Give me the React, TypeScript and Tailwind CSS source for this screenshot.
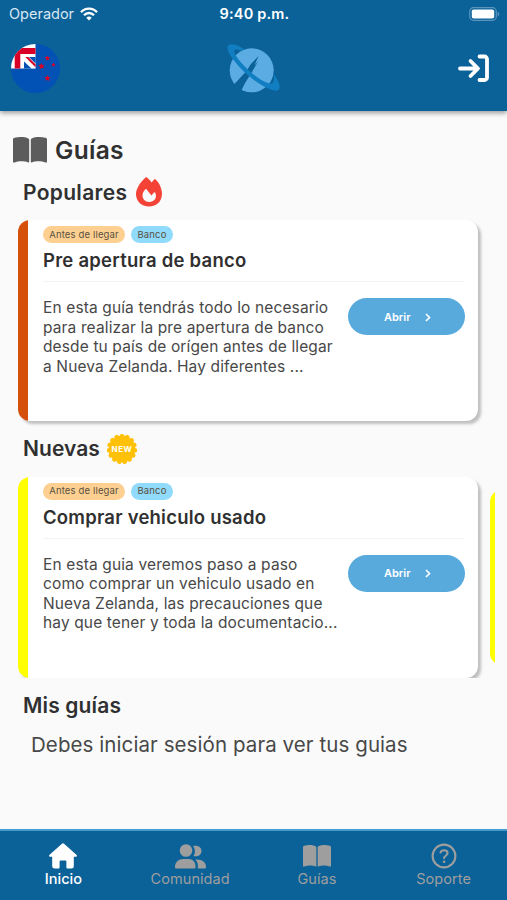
import { type FC, type ReactNode } from "react";

type Guide = {
  id: number;
  title: string;
  titleClass: string;
  tags: { label: string; className: string }[];
  lines: string[];
  barColor: string;
};

const tags = [
  { label: "Antes de llegar", className: "bg-[#fdd092] w-[82px]" },
  { label: "Banco", className: "bg-[#90dafb] w-[42px]" },
];

const popularGuide: Guide = {
  id: 1,
  title: "Pre apertura de banco",
  titleClass: "tracking-[0.240px]",
  tags,
  lines: [
    "En esta guía tendrás todo lo necesario",
    "para realizar la pre apertura de banco",
    "desde tu país de orígen antes de llegar",
    "a Nueva Zelanda. Hay diferentes ...",
  ],
  barColor: "bg-[#d5500a]",
};

const newGuide: Guide = {
  id: 2,
  title: "Comprar vehiculo usado",
  titleClass: "tracking-[0.220px]",
  tags,
  lines: [
    "En esta guia veremos paso a paso",
    "como comprar un vehiculo usado en",
    "Nueva Zelanda, las precauciones que",
    "hay que tener y toda la documentacio...",
  ],
  barColor: "bg-[#ffff00]",
};

const BookIcon: FC<{ className?: string }> = ({ className }) => (
  <svg viewBox="0 0 34 26" preserveAspectRatio="none" className={className} fill="currentColor">
    <path d="M0 2.600C0 1.600.600 1 1.500.800 6-.400 12-.200 15.300 1.500c.600.300.900.700.900 1.400v21.800c0 .700-.500 1-1.100.700C11.500 24 5.500 23.900 1.500 25.500.700 25.900 0 25.500 0 24.600Z" />
    <path d="M34 2.600C34 1.600 33.400 1 32.500.800 28-.400 22-.200 18.700 1.500c-.600.300-.900.700-.900 1.400v21.800c0 .700.500 1 1.100.700C22.500 24 28.500 23.900 32.500 25.500 33.300 25.900 34 25.500 34 24.600Z" />
  </svg>
);

const WifiIcon: FC = () => (
  <svg viewBox="0 0 18 14" className="h-[14px] w-[18px]" fill="none" stroke="white" strokeWidth="2.300">
    <path d="M1 5.200C5.300.4 12.700.4 17 5.200" />
    <path d="M4 8.300C6.800 5.200 11.200 5.200 14 8.300" />
    <path d="M9 13.500 6.300 10.700C7.800 9.200 10.200 9.200 11.700 10.700Z" fill="white" stroke="none" />
  </svg>
);

const BatteryIcon: FC = () => (
  <svg viewBox="0 0 31 14" className="h-[14px] w-[31px]">
    <rect x="0.700" y="0.700" width="26.600" height="12.600" rx="3.800" fill="none" stroke="#5b95bb" strokeWidth="1.200" />
    <rect x="2.800" y="2.500" width="22.400" height="9" rx="1.800" fill="white" />
    <path d="M28.700 4.700c2 .8 2 3.800 0 4.600Z" fill="#5b95bb" />
  </svg>
);

const FlagIcon: FC = () => (
  <svg viewBox="0 0 49 49" className="size-[49px]">
    <clipPath id="flag">
      <circle cx="24.500" cy="24.500" r="24.500" />
    </clipPath>
    <g clipPath="url(#flag)">
      <path d="M0 0h49v49H0Z" fill="#0251b5" />
      <path d="M0 0h24.500v24.500H0Z" fill="white" />
      <path d="M0 4h24.500v6H9.300v14.500H3.700V10H0Z" fill="#d80027" />
      <path d="M13 13h11.500v11.500H13Z" fill="#0251b5" />
      <path d="M12.500 12.500H17.500L24.500 19.500v5H20.500L12.500 17Z" fill="white" />
      <path d="M14.300 13h2.900l7.300 7.300v2.900Z" fill="#d80027" />
    </g>
    <g fill="#d80027">
      <path d="m36.500 11.500.7 1.700 2-.1-1.400 1.500.7 1.900-2-.9-1.700 1 .3-2-1.500-1.300 2-.2Z" />
      <path d="m30.500 19 .9 1.900 2.100-.1-1.300 1.700.7 2-2.100-.7-1.900 1.100.1-2.200-1.700-1.300 2.200-.6Z" />
      <path d="m42.500 18.600.6 1.300 1.400.1-1 1.100.2 1.400-1.300-.6-1.200.8.200-1.500-1.100-.9 1.400-.3Z" />
      <path d="m36.500 31 .9 1.900 2.200.2-1.600 1.500.4 2.300-1.900-1.100-2 1 .4-2.200-1.500-1.500 2.100-.2Z" />
    </g>
  </svg>
);

const LogoIcon: FC = () => (
  <svg viewBox="0 0 56 50" className="h-[50px] w-[56px]">
    <circle cx="25.700" cy="27.300" r="22" fill="#5aace2" />
    <path d="M32.500 13 24.500 21.500 20.500 28 7 42.500 14.500 50.500C16.500 44 20 38 24.500 31.500L32 18.500 28.500 22.500Z" fill="#0b6299" />
    <path
      d="M18 6C10 .500 1.500-.500 1.500 4.500 1.500 9 5 13.500 8 17.500 18 30.500 31.500 41 44 46.300 50.500 49 54.500 47.500 53.500 42.500 53 39.500 51 35.500 47.500 30.500 48.500 35 48.500 38.500 46 40.500 38.500 41.500 24 29.500 16 20.500 9.500 13 7 8.500 9 7 10.500 6 13.500 7 15 7.800Z"
      fill="#107ec1"
    />
  </svg>
);

const LoginIcon: FC = () => (
  <svg viewBox="0 0 32 28" className="h-[28px] w-[32px]" fill="none" stroke="white" strokeWidth="3.800" strokeLinecap="round" strokeLinejoin="round">
    <path d="M2 14.500h17M12.500 7 20 14.500l-7.500 7.500" />
    <path d="M21.500 2.500H26.500a2.500 2.500 0 0 1 2.500 2.500v18.500A2.500 2.500 0 0 1 26.500 26h-5" />
  </svg>
);

const FireIcon: FC = () => (
  <svg viewBox="0 0 26 30" className="h-[30px] w-[26px]">
    <path d="M9.500.5c.4-.4 1-.4 1.500 0 2 1.700 3.500 3.400 4.700 5 .9-1.300 1.700-2.300 2.500-3 .5-.4 1-.4 1.500 0C23.500 6 26 12 26 16.500 26 24.500 20.500 29.500 13 29.500S0 24.500 0 17C0 12 4 5.500 9.500.5Z" fill="#f44336" />
    <path d="M9.300 12.500c.5-.6 1-.5 1.400 0l4.700 5.900 2.600-2.900c.4-.5.9-.4 1.200.2C21.500 20.500 18.500 25 13.200 25 9 25 6.500 22 6.500 18.500c0-2.200 1.100-4.300 2.800-6Z" fill="#fafafa" />
  </svg>
);

// scalloped badge, one bump per 24 degrees
const NewBadge: FC = () => (
  <svg viewBox="0 0 32 32" className="size-[32px]">
    <g fill="#ffc107">
      <circle cx="16" cy="16" r="13.400" />
      {Array.from({ length: 15 }, (_, i) => (
        <rect key={i} x="13.900" y="0.900" width="4.200" height="5" rx="1.500" transform={`rotate(${i * 24} 16 16)`} />
      ))}
    </g>
    <text x="16" y="19.200" textAnchor="middle" fontFamily="Inter, sans-serif" fontSize="8" fontWeight="700" letterSpacing=".5" fill="white">
      NEW
    </text>
  </svg>
);

const HomeIcon: FC = () => (
  <svg viewBox="0 0 28 26" className="h-[26px] w-[28px]" fill="white">
    <path d="M12.700.9a2 2 0 0 1 2.600 0L27.400 11.700c1 .9.500 2.100-.8 2.100h-1.800V23a2.500 2.500 0 0 1-2.500 2.500h-3.600c-.8 0-1.300-.5-1.300-1.300v-5.500c0-.8-.5-1.300-1.300-1.300h-4.200c-.8 0-1.300.5-1.300 1.300v5.500c0 .8-.5 1.300-1.300 1.300H5.700A2.500 2.500 0 0 1 3.200 23v-9.200H1.400c-1.300 0-1.800-1.200-.8-2.100Z" />
  </svg>
);

const PeopleIcon: FC = () => (
  <svg viewBox="0 0 31 25" className="h-[25px] w-[31px]" fill="currentColor">
    <circle cx="11" cy="6.500" r="6.300" />
    <path d="M0 22.500C0 18 4 15 8 15h5.500c4.500 0 7 3.500 7 7.500v.8a1.300 1.300 0 0 1-1.300 1.300H1.300A1.300 1.300 0 0 1 0 23.300Z" />
    <path d="M18 2c5-1.200 8.500 1.300 8.500 5 0 4-4 6.200-8 5 2-2.900 2-7-.5-10Z" />
    <path d="M20.500 15.700c6-.7 10.500 2.500 10.500 7v.5a1.300 1.300 0 0 1-1.300 1.300h-7c.8-3.500-.2-6.800-2.200-8.800Z" />
  </svg>
);

const HelpIcon: FC = () => (
  <svg viewBox="0 0 26 26" className="size-[26px]" fill="none" stroke="currentColor" strokeWidth="2.100" strokeLinecap="round">
    <circle cx="13" cy="13" r="11.400" />
    <path d="M9.500 9.500c.5-1.800 1.800-2.300 3.500-2.300 2 0 3.600 1.100 3.600 2.900 0 2.600-3.500 2.700-3.500 5" />
    <circle cx="13.100" cy="18.700" r=".6" fill="currentColor" strokeWidth="1.400" />
  </svg>
);

const GuideCard: FC<{ guide: Guide }> = ({ guide }) => {
  return (
    <article className="flex h-[201px] w-[460px] shrink-0 overflow-hidden rounded-[12px] bg-white shadow-[3px_3px_3px_rgba(0,0,0,0.24)]">
      <div className={`w-[10px] shrink-0 ${guide.barColor}`} />
      <div className="flex flex-1 flex-col pl-[15px] pr-[13px]">
        <div className="mt-[6px] flex gap-[6px]">
          {guide.tags.map((tag) => (
            <span
              key={tag.label}
              className={`flex h-[17px] items-center justify-center whitespace-nowrap rounded-full pt-px text-[9.500px] tracking-[0.150px] text-[#58503f] ${tag.className}`}
            >
              {tag.label}
            </span>
          ))}
        </div>
        <h3 className={`mt-[5px] h-[24px] whitespace-nowrap text-[18.500px] font-semibold leading-[24px] ${guide.titleClass}`}>{guide.title}</h3>
        <div className="mt-[9px] h-px bg-[#f4f4f4]" />
        <div className="mt-[16px] flex items-start justify-between">
          <p className="whitespace-nowrap text-[15.500px] leading-[19.500px] tracking-[0.130px] text-[#484848]">
            {guide.lines.map((line) => (
              <span key={line} className="block">
                {line}
              </span>
            ))}
          </p>
          <button className="flex h-[37px] w-[117px] shrink-0 items-center rounded-full bg-[#58aadd] pl-[36px] pt-px text-[11px] font-semibold text-white">
            Abrir
            <svg viewBox="0 0 6 9" className="ml-[14px] h-[9px] w-[6px]" fill="none" stroke="white" strokeWidth="1.600">
              <path d="m1 1 3.500 3.500L1 8" />
            </svg>
          </button>
        </div>
      </div>
    </article>
  );
};

const TabItem: FC<{ label: string; active?: boolean; children: ReactNode }> = ({ label, active, children }) => (
  <a className={`flex flex-1 flex-col items-center ${active ? "text-white" : "text-[#9e9e9e]"}`}>
    <div className="mt-[11px] flex h-[28px] items-center justify-center">{children}</div>
    <span className={`text-[14.500px] leading-[18px] ${active ? "font-medium" : "tracking-[0.060px]"}`}>{label}</span>
  </a>
);

const App: FC = () => {
  return (
    <div className="flex h-[900px] w-[507px] flex-col overflow-hidden bg-[#fafafa] font-['Inter',sans-serif] text-[#303030]">
      <header className="z-10 h-[111px] shrink-0 bg-[#0b6299] text-white shadow-[0_2px_5px_rgba(0,0,0,0.4)]">
        <div className="grid h-[28px] grid-cols-3 items-center pl-[9px] pr-[7px]">
          <div className="flex items-center gap-[6px] text-[14.500px] text-[#d8e7f1]">
            Operador
            <WifiIcon />
          </div>
          <span className="text-center text-[14.500px] font-semibold tracking-[0.200px]">9:40 p.m.</span>
          <div className="flex justify-end">
            <BatteryIcon />
          </div>
        </div>
        <div className="mt-[15px] grid h-[50px] grid-cols-3 items-center pl-[11px] pr-[17px]">
          <FlagIcon />
          <div className="flex justify-center pl-[7px]">
            <LogoIcon />
          </div>
          <div className="flex justify-end">
            <LoginIcon />
          </div>
        </div>
      </header>

      <main className="flex flex-1 flex-col">
        <div className="mt-[22px] flex h-[34px] items-center gap-[8px] pl-[13px]">
          <BookIcon className="h-[26px] w-[34px] text-[#5c5c5c]" />
          <h1 className="text-[24.500px] font-semibold tracking-[0.300px]">Guías</h1>
        </div>

        <section>
          <div className="mt-[8px] flex h-[34px] items-center gap-[9px] pl-[23px]">
            <h2 className="pt-[2px] text-[21px] font-semibold tracking-[0.300px]">Populares</h2>
            <FireIcon />
          </div>
          <div className="mt-[11px] pl-[18px]">
            <GuideCard guide={popularGuide} />
          </div>
        </section>

        <section>
          <div className="mt-[11px] flex h-[34px] items-center gap-[6px] pl-[23px]">
            <h2 className="text-[21px] font-semibold tracking-[0.060px]">Nuevas</h2>
            <NewBadge />
          </div>
          {/* the next slide peeks in on the right */}
          <div className="ml-[18px] mt-[10px] flex h-[202px] w-[477px] items-center gap-[12px] overflow-hidden">
            <GuideCard guide={newGuide} />
            <div className="h-[173px] w-[396px] shrink-0 overflow-hidden rounded-[10px] bg-white">
              <div className="h-full w-[8px] bg-[#ffff00]" />
            </div>
          </div>
        </section>

        <section>
          <h2 className="mt-[13px] pl-[23px] text-[21px] font-semibold leading-[30px] tracking-[0.150px]">Mis guías</h2>
          <p className="mt-[10px] pl-[31px] text-[20.500px] leading-[28px] tracking-[0.080px] text-[#484848]">Debes iniciar sesión para ver tus guias</p>
        </section>
      </main>

      <nav className="flex h-[71px] shrink-0 border-t-2 border-[#439bcf] bg-[#0b6299]">
        <TabItem label="Inicio" active>
          <HomeIcon />
        </TabItem>
        <TabItem label="Comunidad">
          <PeopleIcon />
        </TabItem>
        <TabItem label="Guías">
          <BookIcon className="h-[22px] w-[28px]" />
        </TabItem>
        <TabItem label="Soporte">
          <HelpIcon />
        </TabItem>
      </nav>
    </div>
  );
};

export default App;
